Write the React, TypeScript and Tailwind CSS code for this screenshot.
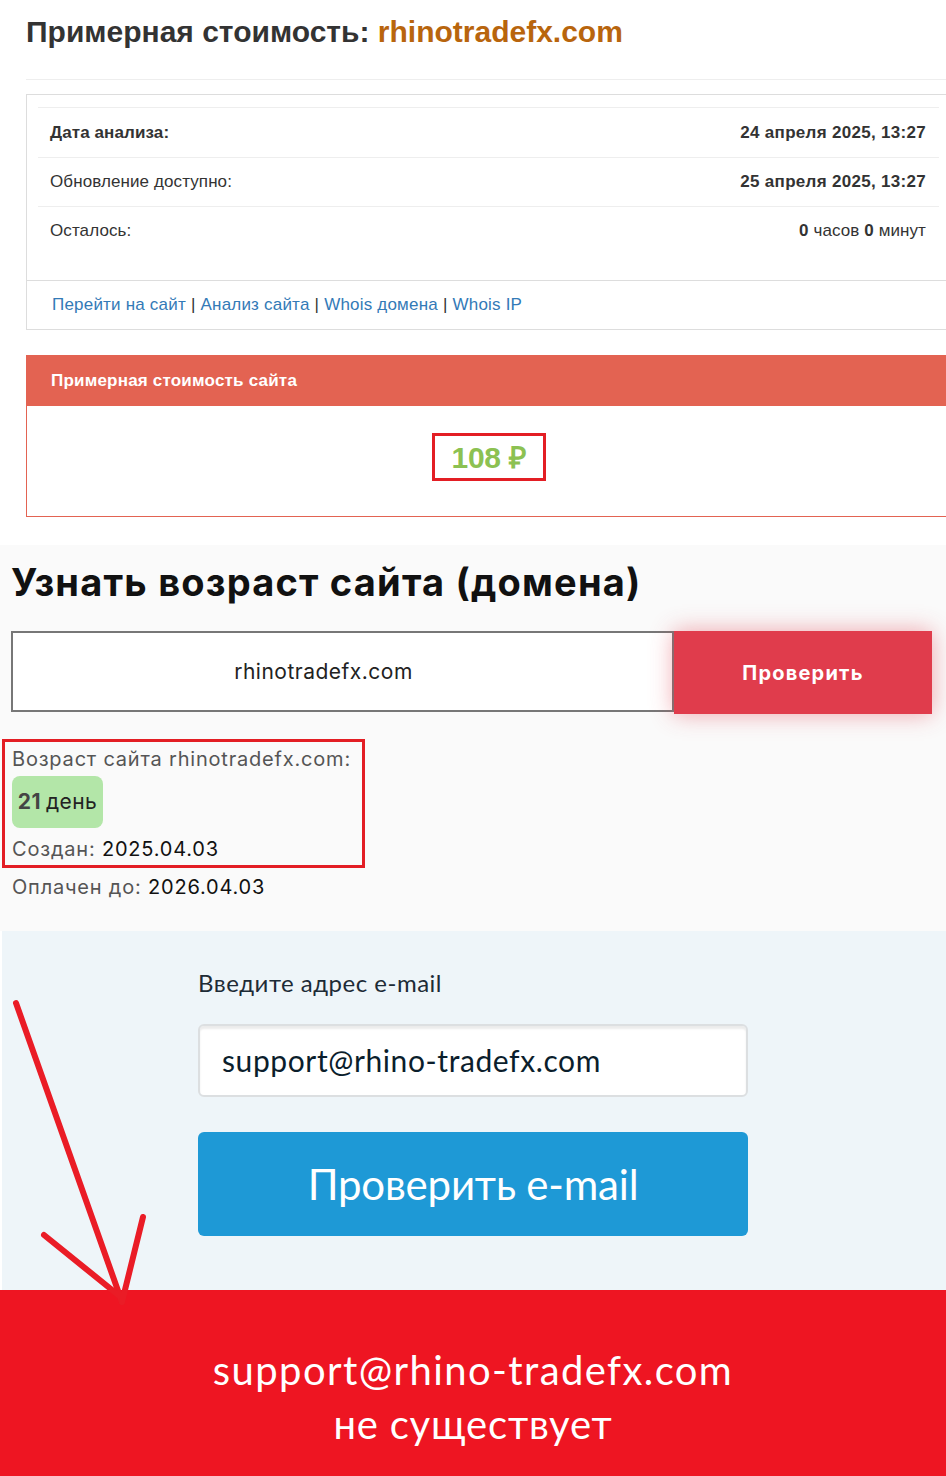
import React from "react";

export default function App() {
  return (
    <div className="relative w-[946px] h-[1476px] overflow-hidden bg-white">
      {/* Section 1 & 2 */}
      <div className="h-[545px] bg-white font-['Liberation_Sans',Arial,sans-serif]">
        <div className="pl-[26px] pt-[15px]">
          <h1 className="text-[30px] leading-[34px] font-bold text-[#333]">
            Примерная стоимость: <span className="text-[#b8650d]">rhinotradefx.com</span>
          </h1>
        </div>
        <div className="ml-[26px] mt-[30px] border-t border-[#eeeeee]" />
        <div className="ml-[26px] mt-[14px] w-[925px] border border-[#dddddd]">
          <div className="px-[11px] pt-[12px] pb-[25px]">
            <div className="border-t border-[#eeeeee]">
              <div className="flex h-[50px] items-center justify-between pl-[12px] pr-[13px] text-[17px] text-[#333] tracking-[0.1px] border-b border-[#eeeeee]">
                <span className="font-bold">Дата анализа:</span>
                <span className="font-bold tracking-[0.3px]">24 апреля 2025, 13:27</span>
              </div>
              <div className="flex h-[49px] items-center justify-between pl-[12px] pr-[13px] text-[17px] text-[#333] tracking-[0.1px] border-b border-[#eeeeee]">
                <span>Обновление доступно:</span>
                <span className="font-bold tracking-[0.3px]">25 апреля 2025, 13:27</span>
              </div>
              <div className="flex h-[48px] items-center justify-between pl-[12px] pr-[13px] text-[17px] text-[#333] tracking-[0.1px]">
                <span>Осталось:</span>
                <span>
                  <b>0</b> часов <b>0</b> минут
                </span>
              </div>
            </div>
          </div>
          <div className="border-t border-[#dddddd] h-[49px] flex items-center pl-[25px] text-[17px] text-[#333] tracking-[0.2px]">
            <span className="text-[#337ab7]">Перейти на сайт</span>
            <span className="mx-[5px]">|</span>
            <span className="text-[#337ab7]">Анализ сайта</span>
            <span className="mx-[5px]">|</span>
            <span className="text-[#337ab7]">Whois домена</span>
            <span className="mx-[5px]">|</span>
            <span className="text-[#337ab7]">Whois IP</span>
          </div>
        </div>

        <div className="ml-[26px] mt-[25px] w-[925px]">
          <div className="h-[51px] bg-[#e36352] flex items-center pl-[25px] text-white font-bold text-[17px] tracking-[0.2px]">
            Примерная стоимость сайта
          </div>
          <div className="h-[111px] border border-t-0 border-[#e36352] flex items-start justify-center">
            <div className="mt-[27px] w-[114px] h-[48px] border-[3px] border-[#e31e24] flex items-center justify-center">
              <span className="text-[30px] font-bold text-[#8cc152] tracking-[-0.3px]">108 ₽</span>
            </div>
          </div>
        </div>
      </div>

      {/* Section 3 */}
      <div className="h-[386px] bg-[#fafafa] font-['Inter',sans-serif] pl-[11px]">
        <h2 className="pt-[15px] text-[38px] leading-[44px] font-bold text-[#111] tracking-[1.2px]">
          Узнать возраст сайта (домена)
        </h2>
        <div className="mt-[27px] flex h-[83px]">
          <div className="w-[663px] h-[81px] border-2 border-[#777] bg-white flex items-center justify-center pr-[38px] text-[21px] text-[#222] tracking-[0.5px]">
            rhinotradefx.com
          </div>
          <div className="w-[258px] h-[83px] bg-[#e03c4c] shadow-[0_0_22px_rgba(224,60,76,0.45)] flex items-center justify-center text-white font-bold text-[20px] tracking-[1.2px]">
            Проверить
          </div>
        </div>
        <div className="relative mt-[26px] pt-[5px] text-[20px] text-[#555] tracking-[0.8px]">
          <div className="absolute left-[-9px] top-[-1px] w-[363px] h-[129px] border-[3px] border-[#e31e24]" />
          <div className="leading-[28px] pl-[1px]">Возраст сайта rhinotradefx.com:</div>
          <div className="mt-[3px] ml-[1px] w-[91px] h-[52px] rounded-[8px] bg-[#b3e6a8] flex items-center justify-center text-[21px] tracking-[0.4px]">
            <b className="text-[#444]">21</b>
            <span className="ml-[5px] text-[#222]">день</span>
          </div>
          <div className="mt-[7px] leading-[28px] pl-[1px]">
            Создан: <span className="text-[#111]">2025.04.03</span>
          </div>
          <div className="mt-[10px] leading-[28px] pl-[1px]">
            Оплачен до: <span className="text-[#111]">2026.04.03</span>
          </div>
        </div>
      </div>

      {/* Section 4 */}
      <div className="h-[359px] bg-[#eef5f9] ml-[2px] font-['Lato',sans-serif] pl-[196px]">
        <div className="pt-[38px] text-[24px] leading-[28px] text-[#1d2b36] tracking-[0.5px]">
          Введите адрес e-mail
        </div>
        <div className="mt-[27px] w-[550px] h-[73px] rounded-[6px] border-2 border-[#dcdfe1] bg-white shadow-[inset_0_3px_2px_rgba(0,0,0,0.08)] flex items-center pl-[22px] text-[30px] text-[#0b1e2c] tracking-[0.6px]">
          support@rhino-tradefx.com
        </div>
        <div className="mt-[35px] w-[550px] h-[104px] rounded-[6px] bg-[#1e99d6] flex items-center justify-center text-white text-[42px] tracking-[-0.2px]">
          Проверить e-mail
        </div>
      </div>

      {/* Section 5 */}
      <div className="h-[187px] bg-[#ee1522] font-['Lato',sans-serif] flex flex-col items-center pt-[56px] text-white">
        <div className="text-[40px] leading-[48px] tracking-[1.4px]">support@rhino-tradefx.com</div>
        <div className="text-[40px] leading-[48px] mt-[6px] tracking-[0.8px]">не существует</div>
      </div>

      {/* Arrow annotation */}
      <svg className="absolute left-0 top-0 pointer-events-none" width="946" height="1476" viewBox="0 0 946 1476">
        <g stroke="#ea1c26" strokeWidth="6" strokeLinecap="round" fill="none">
          <line x1="16" y1="1003" x2="122" y2="1302" />
          <line x1="44" y1="1235" x2="122" y2="1298" />
          <line x1="143" y1="1217" x2="122" y2="1302" />
        </g>
      </svg>
    </div>
  );
}
